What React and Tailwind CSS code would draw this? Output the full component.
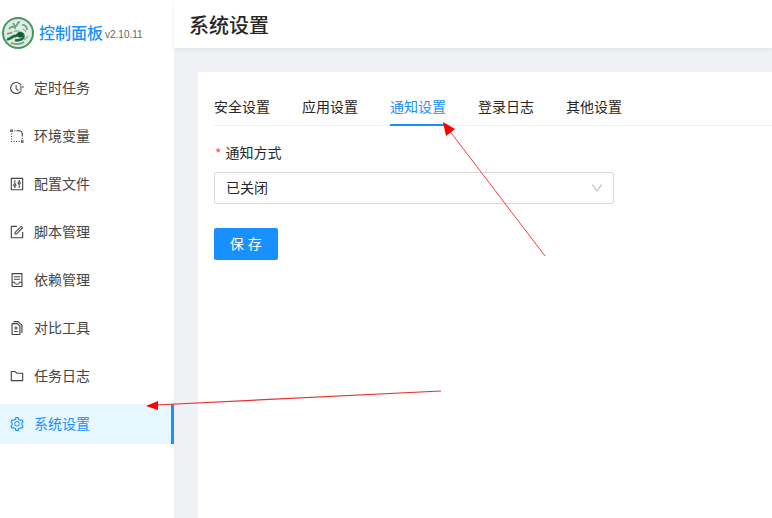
import React from "react";
import {
  AiOutlineFieldTime,
  AiOutlineRadiusSetting,
  AiOutlineControl,
  AiOutlineForm,
  AiOutlineContainer,
  AiOutlineDiff,
  AiOutlineFolder,
  AiOutlineSetting,
  AiOutlineDown,
} from "react-icons/ai";

const menuItems = [
  { title: "定时任务", icon: AiOutlineFieldTime },
  { title: "环境变量", icon: AiOutlineRadiusSetting },
  { title: "配置文件", icon: AiOutlineControl },
  { title: "脚本管理", icon: AiOutlineForm },
  { title: "依赖管理", icon: AiOutlineContainer },
  { title: "对比工具", icon: AiOutlineDiff },
  { title: "任务日志", icon: AiOutlineFolder },
  { title: "系统设置", icon: AiOutlineSetting, active: true },
];

const tabs = ["安全设置", "应用设置", "通知设置", "登录日志", "其他设置"];

const Logo = () => (
  <svg width="32" height="32" viewBox="0 0 32 32" fill="none">
    <circle cx="16" cy="16" r="15" fill="#dfece3" stroke="#3f9b5f" strokeWidth="2" />
    <path d="M7 12c2-4 5-1 7-3s1-4 4-4M20 8c3-1 5 2 5 5M9 26c3 1 9 2 13-1M5 17c2-1 4 0 5-2M11 6c1 2 3 3 2 6" stroke="#6fa383" strokeWidth="1.8" />
    <path d="M12 14c2 1 3-1 5 0M21 12c1 1 2 1 3 3M22 23c1-1 3-2 4-4" stroke="#8fb89e" strokeWidth="1.4" />
    <path d="M5 22c3 1 5-3 8-3s3-4 6-3 3 5 1 6-4 2-7 1" stroke="#1f6f42" strokeWidth="2.8" />
    <circle cx="18" cy="18" r="2.6" fill="#145a34" />
  </svg>
);

const App = () => {
  return (
    <div className="relative flex w-[772px] h-[518px] overflow-hidden bg-[#f0f1f5] font-['Noto_Sans_CJK_SC',sans-serif]">
      {/* Sidebar */}
      <div className="flex flex-col w-[174px] h-full bg-white shrink-0">
        <div className="flex items-center h-[64px] pt-[1px] pl-[2px]">
          <Logo />
          <span className="ml-[5px] -mt-[1px] text-[16px] leading-[24px] font-medium text-[#1890ff]">控制面板</span>
          <span className="ml-[2px] mt-[5px] text-[10px] leading-[14px] text-[#666666] font-['Liberation_Sans',sans-serif]">v2.10.11</span>
        </div>
        <div className="flex flex-col gap-[8px] pt-[4px]">
          {menuItems.map((item) => {
            const Icon = item.icon;
            return (
              <div
                key={item.title}
                className={
                  item.active
                    ? "flex items-center h-[40px] pl-[9px] bg-[#e6f7ff] text-[#1890ff] border-r-[3px] border-[#1890ff]"
                    : "flex items-center h-[40px] pl-[9px] text-[#444444]"
                }
              >
                <Icon size={16} />
                <span className="ml-[9px] -mt-[2px] text-[14px] leading-[20px]">{item.title}</span>
              </div>
            );
          })}
        </div>
      </div>

      {/* Main */}
      <div className="flex flex-col flex-1 min-w-0">
        <div className="flex items-center h-[48px] pl-[15px] bg-white shadow-[0_1px_4px_rgba(0,21,41,0.08)]">
          <span className="mt-[2px] text-[20px] leading-[28px] font-medium text-[#262626]">系统设置</span>
        </div>
        <div className="flex-1 pt-[24px] pl-[24px]">
          <div className="h-full bg-white pt-[24px] pl-[16px]">
            <div className="flex gap-[32px] h-[30px] border-b border-[#f0f0f0]">
              {tabs.map((tab, i) => (
                <div
                  key={tab}
                  className={
                    i === 2
                      ? "h-[30px] border-b-2 border-[#1890ff] text-[14px] leading-[20px] text-[#1890ff]"
                      : "h-[30px] text-[14px] leading-[20px] text-[#262626]"
                  }
                >
                  {tab}
                </div>
              ))}
            </div>
            <div className="flex items-center h-[22px] mt-[16px] text-[14px] leading-[20px] text-[#262626]">
              <span className="ml-[1px] mr-[4px] text-[#ff4d4f]">*</span>
              <span className="-mt-[2px]">通知方式</span>
            </div>
            <div className="flex items-center justify-between w-[400px] h-[32px] mt-[8px] pl-[11px] pr-[9px] border border-[#d9d9d9] rounded-[2px] text-[14px] text-[#262626]">
              <span className="-mt-[2px]">已关闭</span>
              <AiOutlineDown size={14} className="text-[#bfbfbf]" />
            </div>
            <button className="w-[64px] h-[32px] mt-[24px] bg-[#1890ff] rounded-[2px] text-[14px] tracking-[0.5px] text-white">
              <span className="block -mt-[2px]">保 存</span>
            </button>
          </div>
        </div>
      </div>

      {/* Annotation arrows */}
      <svg className="absolute top-0 left-0 pointer-events-none" width="772" height="518" fill="none">
        <line x1="545" y1="256" x2="449" y2="130" stroke="#ff3b3b" strokeWidth="1" />
        <polygon points="443,122 455,129 446,136" fill="#ff0000" />
        <line x1="441" y1="391" x2="156" y2="405" stroke="#e8312f" strokeWidth="1.2" />
        <polygon points="146,406 158,401 158,410" fill="#ff0000" />
      </svg>
    </div>
  );
};

export default App;
